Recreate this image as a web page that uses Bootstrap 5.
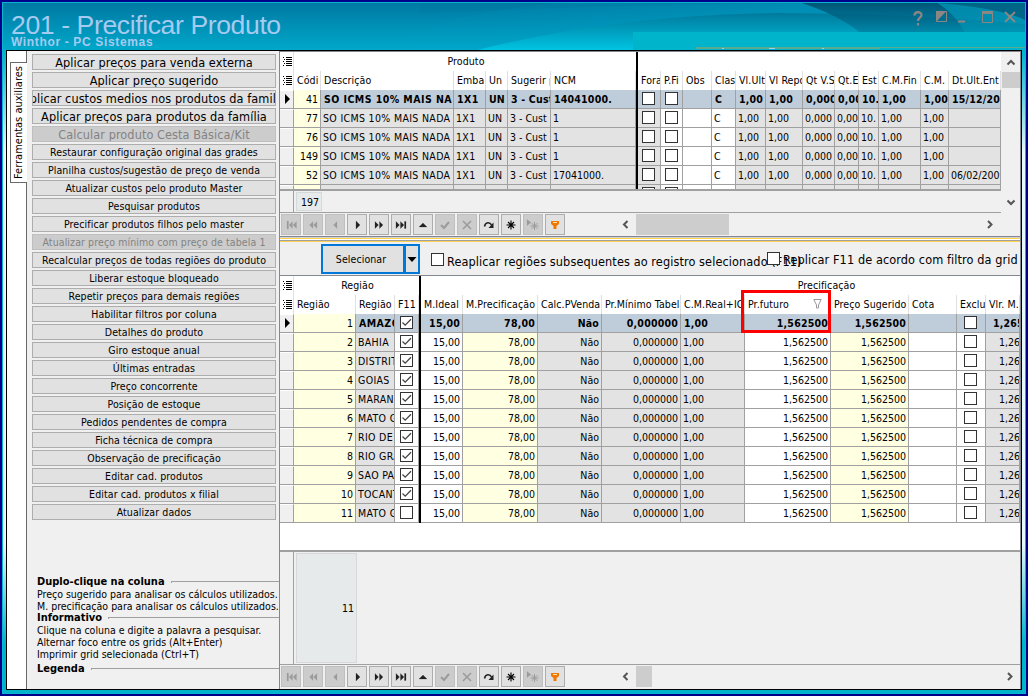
<!DOCTYPE html>
<html lang="pt-BR">
<head>
  <meta charset="UTF-8">
  <meta name="viewport" content="width=device-width, initial-scale=1.0">
  <title>201 - Precificar Produto</title>
  <link href="https://cdn.jsdelivr.net/npm/bootstrap@5.3.0/dist/css/bootstrap.min.css" rel="stylesheet">
  <style>
    body {
      width: 1028px;
      height: 696px;
      overflow: hidden;
      background: #00008b;
      padding: 2px;
      color: #000;
      font: 10.5px/14px "DejaVu Sans Condensed", "DejaVu Sans", Tahoma, sans-serif;
      white-space: nowrap;
    }
    .window {
      width: 1024px;
      height: 692px;
      padding: 0 3px 4px;
      background: linear-gradient(#00b4cc 0 50px, #e8fafc 150px, #e8fafc 540px, #00b4cc 640px);
      border: 1px solid #0ab4cf;
    }
    /* title bar */
    .titlebar { height: 47px; margin: 0 -3px; }
    .titlebar .waves { top: 0; left: 0; }
    .titlebar h1 {
      font: 26.6px/30px "Liberation Sans", Arial, sans-serif;
      letter-spacing: -.4px;
      color: #a6caf0;
      margin: 0;
      padding: 7px 0 0 8px;
    }
    .titlebar h2 {
      font: bold 12px/12px "Liberation Sans", Arial, sans-serif;
      letter-spacing: .65px;
      color: #a6caf0;
      margin: -4px 0 0 8px;
    }
    .titlebar .win-buttons { top: 7px; right: 9px; }
    .client { width: 1016px; height: 640px; border: 1px solid #000; background: #f0f0f0; }
    /* side tab */
    .tab-strip { width: 20px; background: #fff; border-right: 1px solid #696969; padding: 11px 0 0 3px; }
    .tab-strip .side-tab {
      width: 17px; height: 121px; margin-right: -1px;
      border: 1px solid #696969; border-right: 0; background: #fff;
      writing-mode: vertical-rl;
    }
    .side-tab span { transform: rotate(180deg); font-size: 11px; line-height: 15px; }
    /* tools */
    .tools { width: 252px; padding: 3px 3px 0 5px; }
    .tool {
      height: 16px; width: 244px; margin-bottom: 2px;
      border: 1px solid #adadad; background: #e1e1e1; line-height: 15px;
      letter-spacing: .1px;
      overflow: hidden; display: flex; justify-content: center;
    }
    .tool.big { font-size: 12.6px; letter-spacing: .07px; }
    .tool.off { background: #ccc; border-color: #bfbfbf; color: #838383; }
    .notes { padding-left: 5px; line-height: 12px; margin-top: 56px; }
    .notes .caption { font-weight: bold; font-size: 11px; }
    .notes .caption::after {
      content: ""; flex: 1; margin-left: 6px; height: 2px; margin-right: -3px;
      border-top: 1px solid #a0a0a0; border-left: 1px solid #a0a0a0;
    }
    /* grids */
    .right { width: 742px; border-left: 1px solid #828790; border-right: 1px solid #828790; }
    .grid-box { border-top: 1px solid #828790; background: #fff; overflow: hidden; }
    .heads { height: 19px; display: grid; line-height: 19px; }
    .rec { height: 19px; display: grid; line-height: 18px; }
    .rec > div { border-right: 1px solid #a0a0a0; border-bottom: 1px solid #a0a0a0; overflow: hidden; padding: 0 2px; background: #e3e3e3; }
    .rec > .right-al { text-align: right; }
    .rec > .w { background: #fff; }
    .rec > .y { background: #ffffe1; }
    .rec > .ind { background: #f0f0f0; padding: 3px 0 0 5px; line-height: 0; border-top: 1px solid #fff; }
    .rec > .bar, .heads > .bar { background: #000; border: 0; padding: 0; }
    .rec.sel > div:not(:nth-child(2)):not(.ind):not(.bar) { background: #bfcddb; font-weight: bold; padding-left: 3px; letter-spacing: .2px; }
    .rec > .caps { letter-spacing: .33px; }
    .rec.sel > div.caps:not(:nth-child(2)):not(.ind):not(.bar) { letter-spacing: .45px; }
    .heads > div { overflow: hidden; padding-left: 3px; border-right: 1px solid #e0e0e0; letter-spacing: .1px; }
    .heads > .ind { padding: 5px 0 0 3px; line-height: 0; }
    .heads.bands > div { border-right-color: #fff; text-align: center; }
    .heads.bands > .ind { border-right-color: #e0e0e0; text-align: left; }
    .g1 { grid-template-columns: 14px 27px 133px 32px 22px 43px 85px 2px 23px 22px 29px 24px 30px 37px 32px 24px 20px 42px 28px 52px; width: 721px; }
    .g2 { grid-template-columns: 14px 62px 39px 24px 2px 42px 75px 64px 79px 64px 86px 78px 48px 29px 34px; width: 740px; }
    .g1.bands { grid-template-columns: 14px 342px 2px 363px; }
    .g2.bands { grid-template-columns: 14px 125px 2px 599px; }
    .rec > .chk { padding: 2px 0 0 4px !important; line-height: 0; }
    .g2 > .f11 { padding-left: 5px !important; }
    .g2 > .exc { padding-left: 7px !important; }
    .box13 { width: 13px; height: 13px; border: 1px solid #333; background: #fff; display: block; }
    .foot { border-top: 2px solid #a0a0a0; background: #f0f0f0; border-bottom: 1px solid #a0a0a0; }
    .foot .gut { width: 14px; border-right: 1px solid #a0a0a0; }
    .foot .sum { margin: 1px 0 1px 2px; background: #e6eaeb; border: 1px solid #d5d9da; text-align: right; }
    /* navigator */
    .navi { height: 23px; padding: 1px 0 0 1px; gap: 2px; }
    .nb { width: 20px; height: 21px; border: 1px solid #adadad; background: #e1e1e1; line-height: 0; padding: 3px 2px; }
    .nb.off { background: #ccc; border-color: #bfbfbf; }
    .thumb { background: #cdcdcd; height: 21px; }
    .vscroll { width: 19px; background: #f0f0f0; }
    .vscroll .thumb { height: 16px; width: 18px; }
    .split { height: 6px; background: linear-gradient(#828790 0 1px, #d4d4d4 1px 2px, #ffd24f 2px 3px, #fff 3px 4px, #a0a0a0 4px 5px, #ffd24f 5px 6px); }
    .actions { height: 33px; padding: 2px 0 0 41px; font-size: 12.6px; letter-spacing: .09px; }
    .select-btn { width: 84px; height: 30px; border: 2px solid #0078d7; background: #e1e1e1; font-size: 10.5px; line-height: 26px; text-align: center; padding-right: 4px; }
    .select-drop { width: 17px; height: 30px; margin-left: -2px; border: 2px solid #0078d7; border-left-width: 3px; background: #e1e1e1; }
    .lab1 { line-height: 17px; }
    .lab2 { line-height: 16px; }
    .mark-box { left: 741px; top: 290px; width: 90px; height: 43px; border: 3px solid #f00; }
  </style>
</head>
<body>
  <div class="window">
    <header class="titlebar position-relative overflow-hidden">
      <svg class="waves position-absolute" width="1022" height="47" viewBox="3 3 1022 47" preserveAspectRatio="none">
        <defs>
          <linearGradient id="base" x1="0" y1="0" x2="0" y2="1"><stop offset="0" stop-color="#0079a3"/><stop offset="1" stop-color="#00a8ca"/></linearGradient>
          <linearGradient id="wave" x1="0" y1="0" x2="0" y2="1"><stop offset="0" stop-color="#007a9c"/><stop offset="1" stop-color="#00c4e2"/></linearGradient>
          <linearGradient id="fade" x1="0" y1="0" x2="1" y2="0"><stop offset="0" stop-color="#00a0c6" stop-opacity="0"/><stop offset="1" stop-color="#00a8cc"/></linearGradient>
          <linearGradient id="dark" x1="0" y1="0" x2="0" y2="1"><stop offset="0" stop-color="#004c6b" stop-opacity=".85"/><stop offset="1" stop-color="#006f92" stop-opacity=".5"/></linearGradient>
          <linearGradient id="edge" x1="0" y1="0" x2="1" y2="1"><stop offset="0" stop-color="#0085a5" stop-opacity=".8"/><stop offset="1" stop-color="#0085a5" stop-opacity=".4"/></linearGradient>
        </defs>
        <rect x="3" y="3" width="1022" height="47" fill="url(#base)"/>
        <path d="M380 50 Q430 14 560 3 H1025 V50Z" fill="url(#fade)" opacity=".6"/>
        <path d="M420 3 H800 Q600 5 420 13Z" fill="#00789e" opacity=".3"/>
        <path d="M477 50 Q620 14 780 13 Q900 13 1025 24 V50Z" fill="url(#wave)"/>
        <path d="M802 3 H938 Q955 14 965 32 H859 Q840 16 802 3Z" fill="url(#dark)"/>
        <path d="M938 3 H1025 V32 H965 Q955 14 938 3Z" fill="url(#edge)"/>
        <path d="M938 3 H1025 V20 Q1000 8 938 3Z" fill="#004d6c" opacity=".6"/>
        <rect x="633" y="32" width="392" height="15" fill="#00b4cc"/>
        <path d="M633 49H1025" stroke="#00b4cc" stroke-width="4"/>
        <path d="M696 47.5H1025" stroke="#5aab8e"/>
        <path d="M696 48.5H880" stroke="#5aab8e"/>
        <path d="M769 48.5h6M722 48.5h2M822 48.5h2" stroke="#a6caf0"/>
      </svg>
      <h1 class="position-relative">201 - Precificar Produto</h1>
      <h2 class="position-relative">Winthor - PC Sistemas</h2>
      <svg class="win-buttons position-absolute" width="104" height="18" viewBox="0 0 104 18" fill="none" stroke="#8d8783" stroke-width="2">
        <path d="M2.500 5.500C2.500 1 9.500 1 9.500 5C9.500 8 6 7.500 6 11M6 13V15.500" stroke-width="2.200"/>
        <path d="M24.500 1.500H34.500V11.500H24.500Z" stroke-width="1"/><path d="M24 1H34.500L24 12Z" fill="#8d8783" stroke="none"/>
        <path d="M46 11.500H53"/><path d="M70.500 2V12.500H80.500V2" stroke-width="1"/><path d="M70 2.500H81" stroke-width="3"/>
        <path d="M93 2L103 12M103 2L93 12" stroke-width="1.800"/>
      </svg>
    </header>

    <div class="client d-flex">
      <div class="tab-strip flex-shrink-0"><div class="side-tab d-flex justify-content-center"><span>Ferramentas auxiliares</span></div></div>

      <div class="tools flex-shrink-0">
        <div id="tools"></div>
        <div class="notes">
          <div class="caption d-flex align-items-center">Duplo-clique na coluna</div>
          <div>Preço sugerido para analisar os cálculos utilizados.</div>
          <div>M. precificação para analisar os cálculos utilizados.</div>
          <div class="caption d-flex align-items-center">Informativo</div>
          <div>Clique na coluna e digite a palavra a pesquisar.</div>
          <div>Alternar foco entre os grids (Alt+Enter)</div>
          <div>Imprimir grid selecionada (Ctrl+T)</div>
          <div class="caption d-flex align-items-center" style="margin-top:3px">Legenda</div>
        </div>
      </div>

      <div class="right flex-shrink-0">
        <div class="grid-box d-flex" style="height:162px">
          <div class="overflow-hidden" style="width:721px">
            <div class="overflow-hidden" style="height:137px" id="grid1"></div>
            <div class="foot d-flex" style="height:24px">
              <div class="gut"></div><div class="sum" style="width:26px;line-height:18px;padding-right:2px">197</div>
            </div>
          </div>
          <div class="vscroll d-flex flex-column align-items-center">
            <svg width="18" height="20"><path d="M5.500 12.500L9 9L12.500 12.500" fill="none" stroke="#555" stroke-width="2"/></svg>
            <div class="thumb"></div>
            <svg class="mt-auto" width="18" height="22"><path d="M5.500 9.500L9 13L12.500 9.500" fill="none" stroke="#555" stroke-width="2"/></svg>
          </div>
        </div>
        <div class="navi d-flex" id="nav1"></div>
        <div class="split"></div>

        <div class="actions d-flex">
          <div class="select-btn">Selecionar</div>
          <div class="select-drop"><svg class="d-block" width="12" height="26"><path d="M1.500 11H10.500L6 16Z"/></svg></div>
          <label class="d-flex" style="margin:9px 0 0 11px;width:336px"><span class="box13 flex-shrink-0" style="margin-right:3px"></span><span class="lab1">Reaplicar regiões subsequentes ao registro selecionado (F11)</span></label>
          <label class="d-flex position-relative" style="margin-top:8px"><span class="box13 flex-shrink-0" style="margin-right:3px"></span><span class="lab2">Replicar F11 de acordo com filtro da grid</span></label>
        </div>

        <div class="grid-box" style="height:390px">
          <div style="height:274px" id="grid2"></div>
          <div class="foot d-flex" style="height:115px">
            <div class="gut"></div><div class="sum" style="width:61px;line-height:108px;padding-right:2px">11</div>
          </div>
        </div>
        <div class="navi d-flex" id="nav2"></div>
      </div>
    </div>
  </div>
  <div class="mark-box position-absolute"></div>

  <script src="https://cdn.jsdelivr.net/npm/bootstrap@5.3.0/dist/js/bootstrap.bundle.min.js"></script>
  <script>
    const tools = [
      "Aplicar preços para venda externa", "Aplicar preço sugerido", "Aplicar custos medios nos produtos da familia",
      "Aplicar preços para produtos da família", "Calcular produto Cesta Básica/Kit",
      "Restaurar configuração original das grades", "Planilha custos/sugestão de preço de venda",
      "Atualizar custos pelo produto Master", "Pesquisar produtos", "Precificar produtos filhos pelo master",
      "Atualizar preço mínimo com preço de tabela 1", "Recalcular preços de todas regiões do produto",
      "Liberar estoque bloqueado", "Repetir preços para demais regiões", "Habilitar filtros por coluna",
      "Detalhes do produto", "Giro estoque anual", "Últimas entradas", "Preço concorrente", "Posição de estoque",
      "Pedidos pendentes de compra", "Ficha técnica de compra", "Observação de precificação",
      "Editar cad. produtos", "Editar cad. produtos x filial", "Atualizar dados"
    ];
    document.getElementById("tools").innerHTML = tools.map((t, i) =>
      `<div class="tool ${i < 5 ? "big" : ""} ${i === 4 || i === 10 ? "off" : ""}"><span>${t}</span></div>`).join("");

    const listIcon = '<svg width="9" height="9" stroke="#000"><path d="M3 .5h6M3 2.500h6M3 4.500h6M3 6.500h6M3 8.500h6M0 .5h1M1 2.500h1M0 4.500h1M1 6.500h1M0 8.500h1"/></svg>';
    const arrow = '<svg width="6" height="10"><path d="M0 0L5 5L0 10Z"/></svg>';
    const box = on => `<span class="box13">${on ? '<svg class="d-block" width="11" height="11" fill="none" stroke="#444" stroke-width="1.300"><path d="M1.500 5.500L4.200 8.200L10 2.300"/></svg>' : ""}</span>`;

    function band(grid, titles) {
      return `<div class="heads bands ${grid}"><div class="ind">${listIcon}</div><div>${titles[0]}</div><div class="bar"></div><div>${titles[1]}</div></div>`;
    }
    function heads(grid, names) {
      return `<div class="heads ${grid}"><div class="ind">${listIcon}</div>` +
        names.map(n => n === "|" ? '<div class="bar"></div>' : `<div>${n}</div>`).join("") + "</div>";
    }
    function record(grid, cells, styles, selected) {
      return `<div class="rec ${grid} ${selected ? "sel" : ""}"><div class="ind">${selected ? arrow : ""}</div>` +
        cells.map((c, i) => `<div class="${styles[i]}">${c}</div>`).join("") + "</div>";
    }

    const s1 = ["y right-al", "caps", "caps", "", "", "", "bar", "chk", "chk w", "w", "w", "", "", "", "", "", "", "", ""];
    const produtos = [["41", "14041000.", "15/12/2009"], ["77", "1", ""], ["76", "1", ""], ["149", "1", ""], ["52", "17041000.", "06/02/2009"], ["", "", ""]];
    document.getElementById("grid1").innerHTML = band("g1", ["Produto", ""]) +
      heads("g1", ["Códi", "Descrição", "Emba", "Un", "Sugerir p", "NCM", "|", "Fora", "P.Fi", "Obs", "Clas", "Vl.Ult", "Vl Repo", "Qt V.S", "Qt.E", "Est", "C.M.Fin", "C.M.", "Dt.Ult.Ent"]) +
      produtos.map((p, i) => record("g1", i === 5
        ? ["", "", "", "", "", "", "", box(), box(), "", "", "", "", "", "", "", "", "", ""]
        : [p[0], i ? "SO ICMS 10% MAIS NADA" : "SO ICMS 10% MAIS NA", "1X1", "UN", "3 - Cust", p[1], "", box(), box(), "", "C", "1,00", "1,00", "0,000", "0,000", "10.", "1,00", "1,00", p[2]],
        s1, i === 0)).join("");

    const s2 = ["y right-al", "caps", "chk f11 w", "bar", "w right-al", "y right-al", "right-al", "right-al", "", "w right-al", "y right-al", "w", "chk exc w", "vlr"];
    const regioes = ["AMAZONAS", "BAHIA", "DISTRITO", "GOIAS", "MARANHAO", "MATO GROSSO", "RIO DE JANEIRO", "RIO GRANDE", "SAO PAULO", "TOCANTINS", "MATO GROSSO"];
    document.getElementById("grid2").innerHTML = band("g2", ["Região", '<span style="padding-left:210px">Precificação</span>']) +
      heads("g2", ["Região", "Região", "F11", "|", "M.Ideal", "M.Precificação", "Calc.PVenda", "Pr.Mínimo Tabela", "C.M.Real+ICMS",
        '<span class="d-flex justify-content-between pe-2">Pr.futuro<svg width="9" height="19" fill="none" stroke="#999"><path d="M.8 4.500H8.200L5.500 10V13H3.500V10Z"/></svg></span>',
        "Preço Sugerido", "Cota", "Exclu", "Vlr. M."]) +
      regioes.map((r, i) => record("g2", [i + 1, r, box(i < 10), "", "15,00", "78,00", "Não", "0,000000", "1,00", "1,562500", "1,562500", "", box(), '<span style="padding-left:' + (i ? 11 : 4) + 'px">1,265</span>'], s2, i === 0)).join("");

    // navigator glyphs, drawn in a 14x14 box
    const glyphs = [
      ['<path d="M3 3h1.500v8H3zM8.500 3.500L5 7l3.500 3.500zM12.500 3.500L9 7l3.500 3.500z"/>', 1], ['<path d="M7 3.500L3.500 7L7 10.500zM11 3.500L7.500 7l3.500 3.500z"/>', 1],
      ['<path d="M9 3.500L5.500 7L9 10.500z"/>', 1], ['<path d="M6 3v8l4-4z"/>', 0], ['<path d="M3 3.500v7L6.500 7zM7.500 3.500v7L11 7z"/>', 0],
      ['<path d="M2 3.500v7L5.500 7zM6.500 3.500v7L10 7zM10.500 3.500h1.500v7h-1.500z"/>', 0], ['<path d="M3 9L7 5l4 4z"/>', 0],
      ['<path d="M3 7l3 3l5-6" fill="none" stroke-width="2"/>', 1], ['<path d="M3 3l8 8M11 3l-8 8" stroke-width="1.600"/>', 1],
      ['<path d="M2.500 8.500C3.500 3.500 8 4 9.500 7" fill="none" stroke-width="1.600"/><path d="M11.500 4.500v5.500H6.500z" stroke="none"/>', 0],
      ['<path d="M7 2.500v9M2.500 7h9M4 4l6 6M10 4l-6 6" stroke="#000" stroke-width="1.100"/>', 0],
      ['<path d="M1 1.500v6l4-3z"/><path d="M8.500 4v8M4.500 8h8M5.700 5.200l5.600 5.600M11.300 5.200l-5.600 5.600" stroke-width="1"/>', 1],
      ['<path d="M3 3h8v3L8.500 8v3h-3V8L3 6z" fill="#f07800" stroke="none"/><path d="M5 4.500h4" stroke="#ffe0b0" stroke-width="1"/>', 0]
    ];
    function drawNavigator(id, thumb, gap) {
      document.getElementById(id).innerHTML = glyphs.map(([g, off]) =>
        `<div class="nb ${off ? "off" : ""}"><svg width="14" height="14" stroke-width=".2" fill="${off ? "#9b9b9b" : "#222"}" stroke="${off ? "#9b9b9b" : "#222"}">${g}</svg></div>`).join("") +
        `<svg style="margin-left:52px" width="15" height="21" fill="none" stroke="#555" stroke-width="2"><path d="M8.500 7L5 10.500L8.500 14"/></svg>` +
        `<div class="thumb" style="width:${thumb}px"></div>` +
        `<svg style="margin-left:${gap}px" width="12" height="21" fill="none" stroke="#555" stroke-width="2"><path d="M4 7L7.500 10.500L4 14"/></svg>`;
    }
    drawNavigator("nav1", 93, 253);
    drawNavigator("nav2", 16, 350);
  </script>
</body>
</html>
